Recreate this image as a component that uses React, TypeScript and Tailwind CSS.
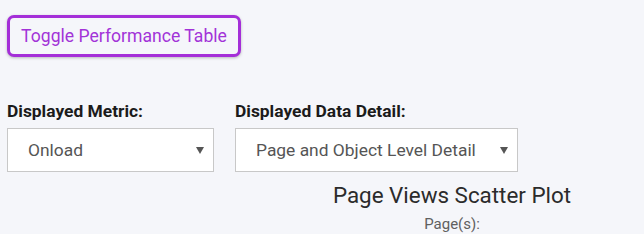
import React from "react";

function Caret() {
  return (
    <svg width="8" height="7" viewBox="0 0 8 7" className="shrink-0">
      <path d="M0 0 H8 L4 7 Z" fill="#555555" />
    </svg>
  );
}

function FakeSelect({ value, width }: { value: string; width: string }) {
  return (
    <div
      className={`${width} h-[44px] flex items-center justify-between bg-white border border-[#c8c8c8] pl-[20px] pr-[9px] text-[17.4px] text-[#555555]`}
    >
      <span>{value}</span>
      <Caret />
    </div>
  );
}

export default function App() {
  return (
    <div
      className="w-[644px] h-[234px] overflow-hidden bg-[#f5f6fa]"
      style={{ fontFamily: "Roboto, 'Liberation Sans', sans-serif" }}
    >
      <div className="pt-[15px] pl-[7px]">
        <button className="h-[42px] w-[234px] rounded-[7px] border-[3px] border-[#a42fd8] bg-[#f5f6fa] text-[17.6px] text-[#a233d8] shadow-[0_1px_3px_rgba(0,0,0,0.25)]">
          Toggle Performance Table
        </button>
      </div>
      <div className="flex gap-[21px] pl-[7px] mt-[43px]">
        <div className="flex flex-col gap-[6px]">
          <div className="text-[17.4px] font-bold text-[#1b1b1b] leading-[22px]">Displayed Metric:</div>
          <FakeSelect value="Onload" width="w-[207px]" />
        </div>
        <div className="flex flex-col gap-[6px]">
          <div className="text-[17.4px] font-bold text-[#1b1b1b] leading-[22px]">Displayed Data Detail:</div>
          <FakeSelect value="Page and Object Level Detail" width="w-[283px]" />
        </div>
      </div>
      <div className="pl-[260px] text-center">
        <div className="text-[22.4px] text-[#2b2b2b] leading-[26px] mt-[10px]">Page Views Scatter Plot</div>
        <div className="text-[15px] text-[#606060] leading-[18px] mt-[7px]">Page(s):</div>
      </div>
    </div>
  );
}
